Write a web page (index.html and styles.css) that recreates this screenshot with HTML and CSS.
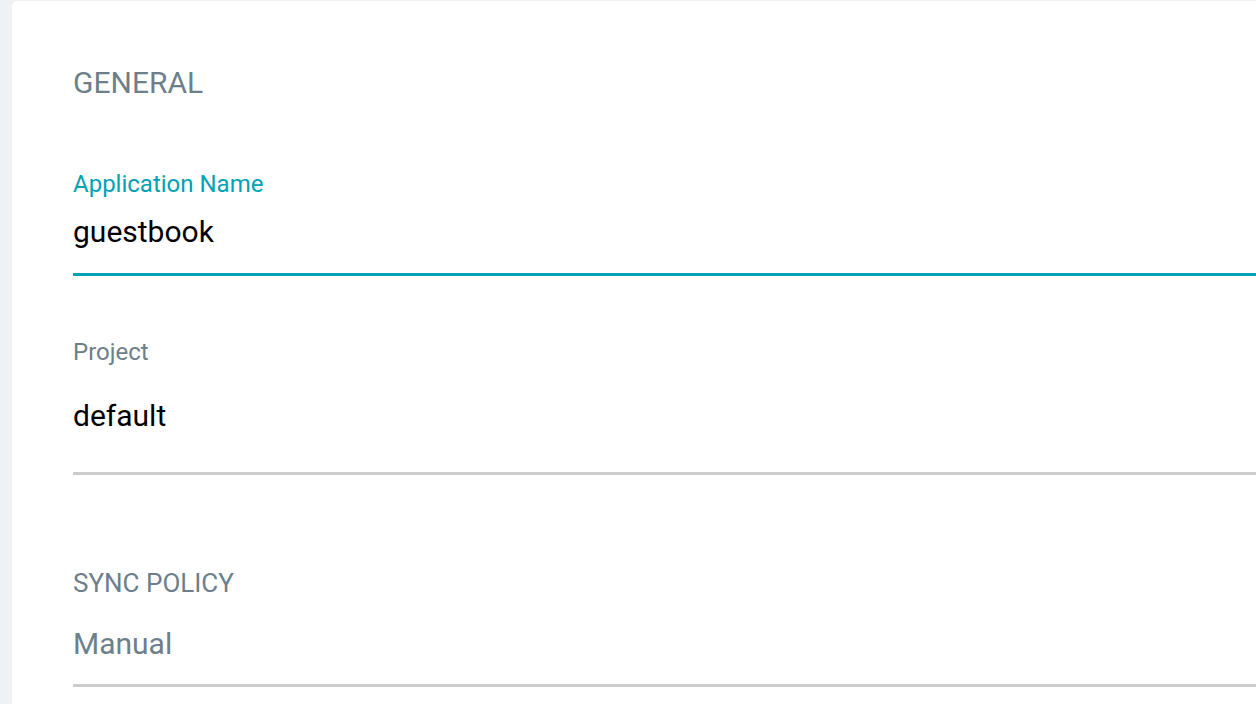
FILE: index.html
```html
<!DOCTYPE html>
<html>
<head>
<meta charset="utf-8">
<link rel="stylesheet" href="styles.css">
</head>
<body>
<div class="page">
  <div class="card">
    <h2 class="section-title">GENERAL</h2>
    <div class="field field--focused">
      <label class="field-label">Application Name</label>
      <div class="field-value">guestbook</div>
      <div class="field-line"></div>
    </div>
    <div class="field field--select">
      <label class="field-label">Project</label>
      <div class="field-value">default</div>
      <div class="field-line"></div>
    </div>
    <h2 class="section-title section-title--sync">SYNC POLICY</h2>
    <div class="field field--policy">
      <div class="field-value field-value--muted">Manual</div>
      <div class="field-line"></div>
    </div>
  </div>
</div>
</body>
</html>
```

FILE: styles.css
```css
html, body {
  margin: 0;
  padding: 0;
  height: 100%;
  overflow: hidden;
}
body {
  font-family: Roboto, "Liberation Sans", sans-serif;
  background: #eef2f5;
}
.page {
  height: 100%;
  padding-left: 12px;
  padding-top: 1px;
  box-sizing: border-box;
}
.card {
  background: #ffffff;
  border-radius: 5px 0 0 0;
  height: 100%;
  padding: 67px 0 0 61px;
  box-sizing: border-box;
}
.section-title {
  margin: 0;
  font-weight: 400;
  font-size: 30px;
  line-height: 30px;
  color: #6d7f8b;
}
.section-title--sync {
  margin-top: 95px;
  font-size: 26px;
  line-height: 26px;
}
.field-label {
  display: block;
  font-size: 24px;
  line-height: 24px;
  color: #6d7f8b;
}
.field-value {
  font-size: 30px;
  line-height: 30px;
  color: #000000;
}
.field-line {
  height: 3px;
  background: #cccccc;
}
.field--focused {
  margin-top: 74px;
}
.field--focused .field-label {
  color: #00a2b3;
}
.field--focused .field-value {
  margin-top: 21px;
}
.field--focused .field-line {
  margin-top: 26px;
  background: #00a2b3;
}
.field--select {
  margin-top: 64px;
}
.field--select .field-value {
  margin-top: 37px;
}
.field--select .field-line {
  margin-top: 41px;
}
.field--policy {
  margin-top: 33px;
}
.field-value--muted {
  color: #6d7f8b;
}
.field--policy .field-line {
  margin-top: 25px;
}
```
